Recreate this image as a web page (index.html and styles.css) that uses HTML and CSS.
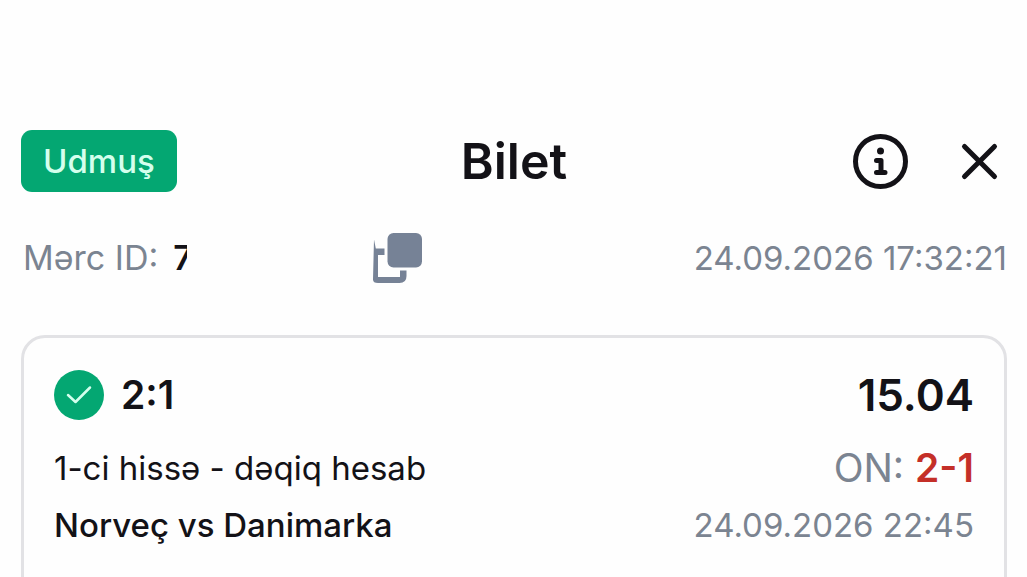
FILE: index.html
```html
<!DOCTYPE html>
<html lang="az">
<head>
    <meta charset="UTF-8">
    <meta name="viewport" content="width=device-width, initial-scale=1.0">
    <title>Bilet</title>
    <link rel="stylesheet" href="styles.css">
</head>
<body>

<header class="ticket-header">
    <span class="status">Udmuş</span>
    <h1>Bilet</h1>
    <div class="actions">
        <button type="button" aria-label="Info">
            <svg width="56" height="56" viewBox="0 0 56 56" fill="none" stroke="#131217" stroke-linecap="round" stroke-linejoin="round">
                <circle cx="28.500" cy="28.500" r="25" stroke-width="5"/>
                <circle cx="28.500" cy="18" r="3.500" fill="#131217" stroke="none"/>
                <path d="M24.500 27.500h4.500v12M24.500 39.500h8.500" stroke-width="5"/>
            </svg>
        </button>
        <button type="button" aria-label="Close">
            <svg width="56" height="56" viewBox="0 0 56 56" fill="none" stroke="#131217" stroke-width="5" stroke-linecap="round">
                <path d="M13.500 13.500l30 30M43.500 13.500l-30 30"/>
            </svg>
        </button>
    </div>
</header>

<main>
    <div class="ticket-info">
        <label class="bet-label muted" for="betId">Mərc ID:</label>
        <output class="bet-id" id="betId">7</output>
        <button type="button" aria-label="Copy">
            <svg width="50" height="50" viewBox="0 0 50 50" fill="#768296">
                <rect x="14.500" y="0" width="34.500" height="34.500" rx="6"/>
                <path d="M1 6.500L2.800 15.500H11.500V22H5V44H27V37.500H33.500V43Q33.500 50 26.500 50H5Q0 50 0 46.500Z"/>
            </svg>
        </button>
        <time class="muted" datetime="2026-09-24T17:32:21">24.09.2026 17:32:21</time>
    </div>

    <section class="bet-card">
        <div class="bet-row outcome">
            <div class="pick">
                <svg width="50" height="50" viewBox="0 0 50 50" fill="none">
                    <circle cx="25" cy="25" r="25" fill="#04a772"/>
                    <path d="M14 25l7.500 7L36 17.500" stroke="#d4ffed" stroke-width="2.500" stroke-linecap="round" stroke-linejoin="round"/>
                </svg>
                <strong>2:1</strong>
            </div>
            <strong class="odds">15.04</strong>
        </div>
        <div class="bet-row">
            <span>1-ci hissə - dəqiq hesab</span>
            <span class="result muted">ON: <strong>2-1</strong></span>
        </div>
        <div class="bet-row">
            <span class="teams">Norveç vs Danimarka</span>
            <time class="muted" datetime="2026-09-24T22:45">24.09.2026 22:45</time>
        </div>
    </section>
</main>

</body>
</html>
```
FILE: styles.css
```css
* {
    box-sizing: border-box;
}

body {
    margin: 0;
    padding: 130px 20px 0 21px;
    font-family: Inter, sans-serif;
    font-size: 33px;
    line-height: 48px;
    color: #131217;
    background-color: #fefefe;
}

button {
    padding: 0;
    border: none;
    background: none;
    cursor: pointer;
}

svg {
    display: block;
}

strong {
    font-weight: 600;
}

.muted {
    color: #7b8491;
}

.ticket-header {
    display: grid;
    grid-template-columns: 1fr auto 1fr;
    align-items: center;
}

.status {
    justify-self: start;
    padding: 7px 22px;
    border-radius: 11px;
    background-color: #04a772;
    color: #d4ffed;
    font-weight: 500;
}

h1 {
    margin: 0;
    font-size: 50px;
    font-weight: 600;
}

.actions {
    display: flex;
    justify-content: flex-end;
    gap: 43px;
}

.ticket-info {
    display: flex;
    align-items: center;
    margin: 41px 0 52px;
    padding-left: 2px;
}

.bet-label,
.bet-id {
    font-size: 34px;
}

.bet-id {
    width: 14px;
    margin-left: 15px;
    margin-right: 186px;
    overflow: hidden;
    font-weight: 600;
}

.ticket-info time {
    margin-left: auto;
}

.bet-card {
    padding: 32px 30px 56px;
    border: 3px solid #e2e2e5;
    border-radius: 24px;
}

.bet-row {
    display: flex;
    justify-content: space-between;
    align-items: center;
    margin-bottom: 9px;
}

.outcome {
    margin-bottom: 24px;
}

.pick {
    display: flex;
    align-items: center;
    gap: 17px;
    font-size: 39px;
}

.odds {
    font-size: 44px;
}

.result {
    font-size: 39px;
}

.result strong {
    color: #c42f28;
}

.teams {
    font-weight: 500;
}
```
